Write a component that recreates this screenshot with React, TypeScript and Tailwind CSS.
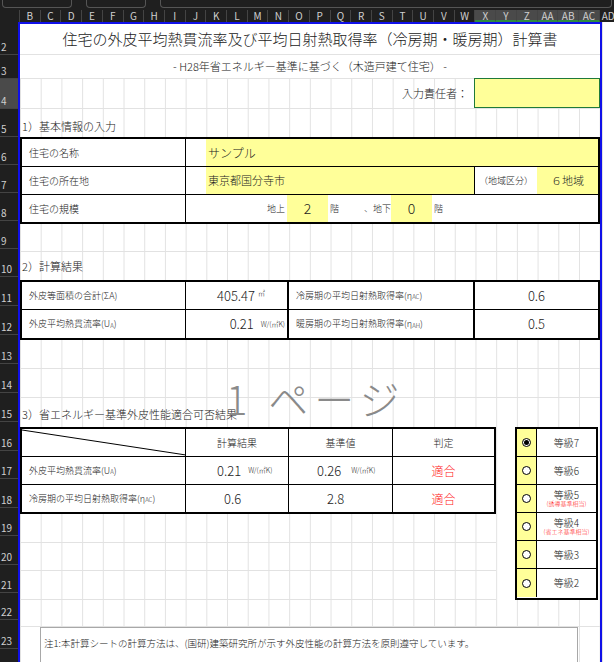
import React from "react";

const cols = ["B","C","D","E","F","G","H","I","J","K","L","M","N","O","P","Q","R","S","T","U","V","W","X","Y","Z","AA","AB","AC"];
const hl = ["X","Y","Z","AA","AB","AC"];

const rowNums: [string, number][] = [
  ["2", 31], ["3", 24], ["4", 30], ["5", 28], ["6", 28], ["7", 28], ["8", 28], ["9", 28], ["10", 28],
  ["11", 29], ["12", 29], ["13", 29], ["14", 29], ["15", 29], ["16", 28.5], ["17", 28.5], ["18", 28.5],
  ["19", 28.5], ["20", 28.5], ["21", 28.5], ["22", 27], ["23", 29], ["24", 29],
];

const grid =
  "bg-[linear-gradient(to_right,#e2e2e2_1px,transparent_1px)] bg-[size:20.71px_100%]";

function Radio({ on }: { on?: boolean }) {
  return (
    <span className="w-[9px] h-[9px] rounded-full border border-black bg-white flex items-center justify-center">
      {on && <span className="w-[5px] h-[5px] rounded-full bg-black" />}
    </span>
  );
}

export default function App() {
  const grades = [
    { t: "等級7", on: true },
    { t: "等級6" },
    { t: "等級5", s: "(誘導基準相当)" },
    { t: "等級4", s: "(省エネ基準相当)" },
    { t: "等級3" },
    { t: "等級2" },
  ];
  return (
    <div
      className="w-[614px] h-[662px] overflow-hidden bg-[#1f1f1f] text-[#222]"
      style={{ fontFamily: '"Noto Sans CJK JP", "Noto Sans", sans-serif' }}
    >
      {/* toolbar strip */}
      <div className="h-[10px] flex gap-[14px] px-[2px]">
        <div className="w-[70px] h-[8px] rounded-b border border-t-0 border-[#555]" />
        <div className="w-[60px] h-[8px] rounded-b border border-t-0 border-[#555]" />
        <div className="flex-1 h-[8px] rounded-b border border-t-0 border-[#555]" />
      </div>
      {/* column header */}
      <div className="h-[12px] flex text-[10px] leading-[12px] text-[#cfcfcf]">
        <div className="w-[20px] shrink-0 border-r border-[#444]" />
        {cols.map((c) => (
          <div
            key={c}
            className={`w-[20.71px] shrink-0 text-center border-r border-[#444] ${hl.includes(c) ? "bg-[#4a4a4a] border-b-2 border-b-[#2e8b3e]" : ""}`}
          >
            {c}
          </div>
        ))}
        <div className="flex-1 pl-[2px]">AD</div>
      </div>
      <div className="flex">
        {/* row numbers */}
        <div className="w-[18px] shrink-0 pt-[2px] text-[10px] text-[#cfcfcf]">
          {rowNums.map(([n, h]) => (
            <div
              key={n}
              className={`flex items-end pl-[1px] border-b border-[#444] ${n === "4" ? "bg-[#4a4a4a]" : ""}`}
              style={{ height: h }}
            >
              {n}
            </div>
          ))}
        </div>
        {/* sheet */}
        <div className="w-[584px] shrink-0 border-2 border-b-0 border-[#1010e8] bg-white relative text-[10px] font-light">
          <div className="h-[31px] border-b border-[#e2e2e2] flex items-center justify-center text-[15px]">
            住宅の外皮平均熱貫流率及び平均日射熱取得率（冷房期・暖房期）計算書
          </div>
          <div className="h-[24px] border-b border-[#e2e2e2] flex items-center justify-center text-[11px]">
            - H28年省エネルギー基準に基づく（木造戸建て住宅） -
          </div>
          <div className={`h-[30px] border-b border-[#e2e2e2] flex items-center justify-end ${grid}`}>
            <span className="text-[11px] pr-[6px]">入力責任者：</span>
            <div className="w-[126px] h-[30px] bg-[#ffff99] border border-[#1f7a3a] -mt-[2px]" />
          </div>
          <div className={`h-[28px] flex items-end pb-[3px] pl-[2px] text-[11px] ${grid}`}>1）基本情報の入力</div>

          {/* table 1 */}
          <div className="border-2 border-black bg-white">
            <div className="h-[28px] flex border-b border-black">
              <div className="w-[164px] border-r border-black flex items-center pl-[7px]">住宅の名称</div>
              <div className="w-[20px]" />
              <div className="flex-1 bg-[#ffff99] flex items-center pl-[2px] text-[12px]">サンプル</div>
            </div>
            <div className="h-[28px] flex border-b border-black">
              <div className="w-[164px] border-r border-black flex items-center pl-[7px]">住宅の所在地</div>
              <div className="w-[20px]" />
              <div className="w-[269px] bg-[#ffff99] border-r border-black flex items-center pl-[2px] text-[11px]">東京都国分寺市</div>
              <div className="w-[62px] flex items-center justify-center text-[9px]">（地域区分）</div>
              <div className="flex-1 bg-[#ffff99] flex items-center justify-center text-[11px]">６地域</div>
            </div>
            <div className="h-[27px] flex">
              <div className="w-[164px] border-r border-black flex items-center pl-[7px]">住宅の規模</div>
              <div className="w-[101px] flex items-center justify-end pr-[2px] text-[9px]">地上</div>
              <div className="w-[41px] bg-[#ffff99] flex items-center justify-center text-[14px]">2</div>
              <div className="w-[22px] flex items-center pl-[2px] text-[9px]">階</div>
              <div className="w-[41px] flex items-center justify-end text-[9px]">、地下</div>
              <div className="w-[41px] bg-[#ffff99] flex items-center justify-center text-[14px]">0</div>
              <div className="flex-1 flex items-center pl-[2px] text-[9px]">階</div>
            </div>
          </div>

          <div className={`h-[28px] border-b border-[#e2e2e2] ${grid}`} />
          <div className={`h-[28px] flex items-center pl-[2px] text-[11px] ${grid}`}>2）計算結果</div>

          {/* table 2 */}
          <div className="border-2 border-black bg-white">
            <div className="h-[28px] flex border-b border-black">
              <div className="w-[164px] border-r border-black flex items-center pl-[7px] text-[9px]">外皮等面積の合計(ΣA)</div>
              <div className="w-[103px] border-r-2 border-black flex items-center justify-end pr-[22px] text-[13px]">
                405.47<span className="text-[7px] ml-[3px] -mt-[4px]">㎡</span>
              </div>
              <div className="w-[186px] border-r-2 border-black flex items-center pl-[7px] text-[9px]">
                冷房期の平均日射熱取得率(η<sub className="text-[6px]">AC</sub>)
              </div>
              <div className="flex-1 flex items-center justify-center text-[13px]">0.6</div>
            </div>
            <div className="h-[28px] flex">
              <div className="w-[164px] border-r border-black flex items-center pl-[7px] text-[9px]">
                外皮平均熱貫流率(U<sub className="text-[6px]">A</sub>)
              </div>
              <div className="w-[103px] border-r-2 border-black flex items-center justify-end pr-[2px] text-[13px]">
                0.21<span className="text-[7px] ml-[7px]">W/(㎡K)</span>
              </div>
              <div className="w-[186px] border-r-2 border-black flex items-center pl-[7px] text-[9px]">
                暖房期の平均日射熱取得率(η<sub className="text-[6px]">AH</sub>)
              </div>
              <div className="flex-1 flex items-center justify-center text-[13px]">0.5</div>
            </div>
          </div>

          <div className={`h-[29px] border-b border-[#e2e2e2] ${grid}`} />
          <div className={`h-[29px] border-b border-[#e2e2e2] ${grid}`} />
          <div className={`h-[29px] flex items-end pb-[5px] pl-[2px] text-[11px] ${grid}`}>3）省エネルギー基準外皮性能適合可否結果</div>

          {/* section 3 */}
          <div className={`flex ${grid}`}>
            <div className="w-[476px]">
              <div className="border-2 border-black bg-white">
                <div className="h-[28px] flex border-b border-black">
                  <div className="w-[164px] border-r border-black">
                    <svg width="164" height="27" className="block">
                      <line x1="0" y1="1" x2="164" y2="26" stroke="#000" strokeWidth="1" />
                    </svg>
                  </div>
                  <div className="w-[103px] border-r border-black flex items-center justify-center text-[10px]">計算結果</div>
                  <div className="w-[104px] border-r border-black flex items-center justify-center text-[10px]">基準値</div>
                  <div className="flex-1 flex items-center justify-center text-[10px]">判定</div>
                </div>
                <div className="h-[28px] flex border-b border-black">
                  <div className="w-[164px] border-r border-black flex items-center pl-[7px] text-[9px]">
                    外皮平均熱貫流率(U<sub className="text-[6px]">A</sub>)
                  </div>
                  <div className="w-[103px] border-r border-black flex items-center pl-[31px] text-[13px]">
                    0.21<span className="text-[7px] ml-[7px]">W/(㎡K)</span>
                  </div>
                  <div className="w-[104px] border-r border-black flex items-center pl-[28px] text-[13px]">
                    0.26<span className="text-[7px] ml-[10px]">W/(㎡K)</span>
                  </div>
                  <div className="flex-1 flex items-center justify-center text-[12px] text-[#ff2020]">適合</div>
                </div>
                <div className="h-[27px] flex">
                  <div className="w-[164px] border-r border-black flex items-center pl-[7px] text-[9px]">
                    冷房期の平均日射熱取得率(η<sub className="text-[6px]">AC</sub>)
                  </div>
                  <div className="w-[103px] border-r border-black flex items-center pl-[38px] text-[13px]">0.6</div>
                  <div className="w-[104px] border-r border-black flex items-center pl-[38px] text-[13px]">2.8</div>
                  <div className="flex-1 flex items-center justify-center text-[12px] text-[#ff2020]">適合</div>
                </div>
              </div>
              <div className="h-[28.5px] border-b border-[#e2e2e2]" />
              <div className="h-[28.5px] border-b border-[#e2e2e2]" />
              <div className="h-[28.5px] border-b border-[#e2e2e2]" />
            </div>
            <div className="w-[19px]" />
            <div className="w-[83px] border-2 border-black bg-white">
              {grades.map((g, i) => (
                <div key={g.t} className={`h-[28px] flex ${i < 5 ? "border-b border-black" : ""}`}>
                  <div className="w-[20px] bg-[#ffff99] border-r border-black flex items-center justify-center">
                    <Radio on={g.on} />
                  </div>
                  <div className="flex-1 flex flex-col items-center justify-center leading-[10px] text-[10px]">
                    <span>{g.t}</span>
                    {g.s && <span className="text-[6px] leading-[7px] text-[#ff2020] whitespace-nowrap">{g.s}</span>}
                  </div>
                </div>
              ))}
            </div>
          </div>

          <div className={`h-[27px] border-b border-[#e2e2e2] ${grid}`} />
          <div className={`h-[60px] ${grid} pl-[20px]`}>
            <div className="w-[538px] h-full bg-white border border-[#a8a8a8] px-[3px] text-[9.5px]">
              <p className="mt-[8px]">注1:本計算シートの計算方法は、(国研)建築研究所が示す外皮性能の計算方法を原則遵守しています。</p>
              <p className="mt-[9px]">注2:内部計算シートは、住宅の外壁の面する方位別のシートに入力してください。</p>
            </div>
          </div>

          {/* page watermark */}
          <div className="absolute left-[206px] top-[354px] text-[40px] leading-none text-[#8a8a8a] font-light tracking-[6px] pointer-events-none">
            1 ページ
          </div>
        </div>
        <div className={`flex-1 bg-white ${grid}`} />
      </div>
    </div>
  );
}
